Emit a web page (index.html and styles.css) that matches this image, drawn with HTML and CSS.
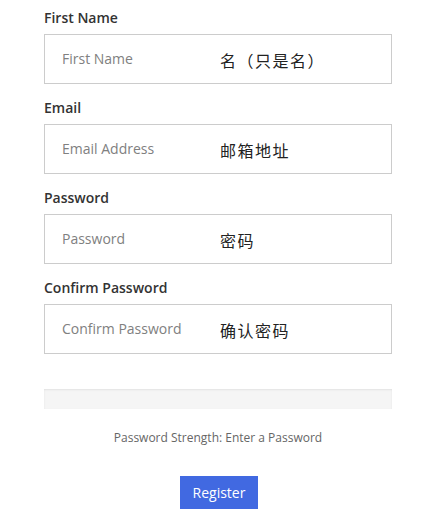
FILE: index.html
```html
<!DOCTYPE html>
<html>
<head>
<meta charset="utf-8">
<link rel="stylesheet" href="styles.css">
</head>
<body>
<form class="form">
  <div class="field">
    <label class="label">First Name</label>
    <div class="input"><span class="ph">First Name</span><span class="zh">名（只是名）</span></div>
  </div>
  <div class="field">
    <label class="label">Email</label>
    <div class="input"><span class="ph">Email Address</span><span class="zh">邮箱地址</span></div>
  </div>
  <div class="field">
    <label class="label">Password</label>
    <div class="input"><span class="ph">Password</span><span class="zh">密码</span></div>
  </div>
  <div class="field">
    <label class="label">Confirm Password</label>
    <div class="input"><span class="ph">Confirm Password</span><span class="zh">确认密码</span></div>
  </div>
  <div class="meter"></div>
  <p class="strength">Password Strength: Enter a Password</p>
  <div class="actions"><button type="button" class="btn">Register</button></div>
</form>
</body>
</html>
```
FILE: styles.css
```css
html, body {
  margin: 0;
  padding: 0;
  background: #fff;
}
body {
  font-family: "Open Sans", "Noto Sans CJK SC", sans-serif;
  color: #333;
}
.form {
  width: 348px;
  margin-left: 44px;
  padding-top: 7px;
  display: flex;
  flex-direction: column;
}
.field {
  display: flex;
  flex-direction: column;
  margin-bottom: 13px;
}
.label {
  font-size: 14px;
  font-weight: 600;
  line-height: 21px;
  color: #333;
  margin-bottom: 6px;
}
.input {
  box-sizing: border-box;
  height: 50px;
  border: 1px solid #ccc;
  display: flex;
  align-items: center;
  padding-left: 17px;
}
.ph {
  width: 158px;
  font-size: 14px;
  color: #808080;
  margin-top: -1px;
}
.zh {
  font-family: "Noto Sans CJK SC", sans-serif;
  font-size: 16px;
  letter-spacing: 1.5px;
  color: #222;
  margin-top: 2px;
}
.meter {
  margin-top: 22px;
  height: 20px;
  background: #f5f5f5;
  box-shadow: inset 0 1px 2px rgba(0,0,0,0.08);
}
.strength {
  margin: 19px 0 0;
  text-align: center;
  font-size: 12px;
  line-height: 20px;
  color: #666;
}
.actions {
  display: flex;
  justify-content: center;
  margin-top: 28px;
}
.btn {
  border: 0;
  background: #4169e1;
  color: #fff;
  font-family: "Open Sans", sans-serif;
  font-size: 14px;
  width: 78px;
  height: 33px;
  padding: 0;
  margin-left: 2px;
}
```
